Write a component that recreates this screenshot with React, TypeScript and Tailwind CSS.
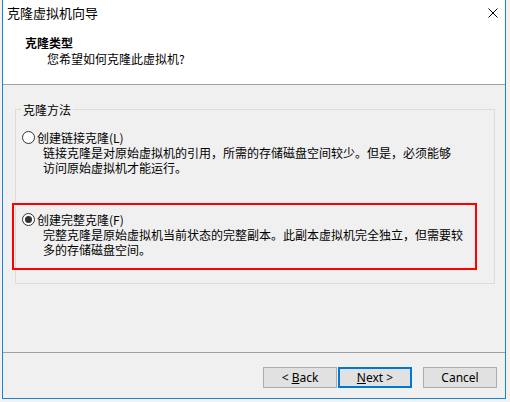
import React from "react";

const cjk = { fontFamily: '"Noto Sans CJK SC", "Noto Sans", sans-serif' };
const ui = { fontFamily: '"Noto Sans", "Open Sans", sans-serif' };

function Radio({ checked }: { checked?: boolean }) {
  return (
    <span className="flex h-[13px] w-[13px] shrink-0 items-center justify-center rounded-full border border-[#333333] bg-white">
      {checked && <span className="h-[7px] w-[7px] rounded-full bg-[#333333]" />}
    </span>
  );
}

function Option({
  checked,
  label,
  hotkey,
  lines,
}: {
  checked?: boolean;
  label: string;
  hotkey: string;
  lines: string[];
}) {
  return (
    <div className="flex flex-col">
      <div className="flex items-center gap-[2px] h-[15px]">
        <Radio checked={checked} />
        <span className="text-[12px] leading-[15px] text-black">
          {label}({hotkey})
        </span>
      </div>
      <div className="pl-[21px]">
        {lines.map((l, i) => (
          <div key={i} className="text-[12px] leading-[15px] text-black whitespace-nowrap">
            {l}
          </div>
        ))}
      </div>
    </div>
  );
}

function Button({
  children,
  primary,
}: {
  children: React.ReactNode;
  primary?: boolean;
}) {
  return (
    <button
      style={ui}
      className={
        "flex h-[21px] w-[74px] items-center justify-center bg-[#e1e1e1] text-[12px] leading-none text-black " +
        (primary ? "border-2 border-[#0078d7]" : "border border-[#adadad]")
      }
    >
      {children}
    </button>
  );
}

export default function App() {
  return (
    <div className="relative h-[402px] w-[510px] overflow-hidden bg-[#f2f2f2]" style={cjk}>
      <div className="ml-[2px] flex h-[399px] w-[504px] flex-col border-x border-b border-[#1883d7] bg-[#f0f0f0]">
        {/* title + header */}
        <div className="flex h-[84px] flex-col bg-white">
          <div className="flex h-[26px] items-center justify-between pl-[4px] pr-[7px]">
            <span className="text-[13px] leading-[26px] text-black">克隆虚拟机向导</span>
            <svg width="10" height="10" viewBox="0 0 10 10" className="block">
              <path d="M0.5 0.5 L9.5 9.5 M9.5 0.5 L0.5 9.5" stroke="#000" strokeWidth="1" fill="none" />
            </svg>
          </div>
          <div className="pl-[22px] pt-[9px] text-[12px] font-bold leading-[16px] text-black">克隆类型</div>
          <div className="pl-[44px] text-[12px] leading-[16px] text-black">您希望如何克隆此虚拟机?</div>
        </div>
        <div className="h-px bg-[#a0a0a0]" />
        {/* body */}
        <div className="h-[267px] pl-[12px] pr-[10px] pt-[24px]">
          <div className="relative h-[175px] border border-[#dcdcdc] pl-[6px] pt-[20px]">
            <span className="absolute left-[5px] top-[-8px] bg-[#f0f0f0] px-[2px] text-[12px] leading-[16px] text-black">
              克隆方法
            </span>
            <div className="flex flex-col gap-[37px]">
              <Option
                label="创建链接克隆"
                hotkey="L"
                lines={[
                  "链接克隆是对原始虚拟机的引用，所需的存储磁盘空间较少。但是，必须能够",
                  "访问原始虚拟机才能运行。",
                ]}
              />
              <Option
                checked
                label="创建完整克隆"
                hotkey="F"
                lines={[
                  "完整克隆是原始虚拟机当前状态的完整副本。此副本虚拟机完全独立，但需要较",
                  "多的存储磁盘空间。",
                ]}
              />
            </div>
          </div>
        </div>
        <div className="h-px bg-[#a0a0a0]" />
        {/* footer */}
        <div className="flex flex-1 items-start justify-end pr-[8px] pt-[14px]">
          <div className="flex">
            <Button>
              &lt;&nbsp;<span className="underline">B</span>ack
            </Button>
            <div className="w-[1px]" />
            <Button primary>
              <span className="underline">N</span>ext &gt;
            </Button>
            <div className="w-[11px]" />
            <Button>Cancel</Button>
          </div>
        </div>
      </div>
      {/* red annotation box */}
      <div className="pointer-events-none absolute left-[12px] top-[203px] h-[67px] w-[465px] border-2 border-[#ff0000]" />
    </div>
  );
}
